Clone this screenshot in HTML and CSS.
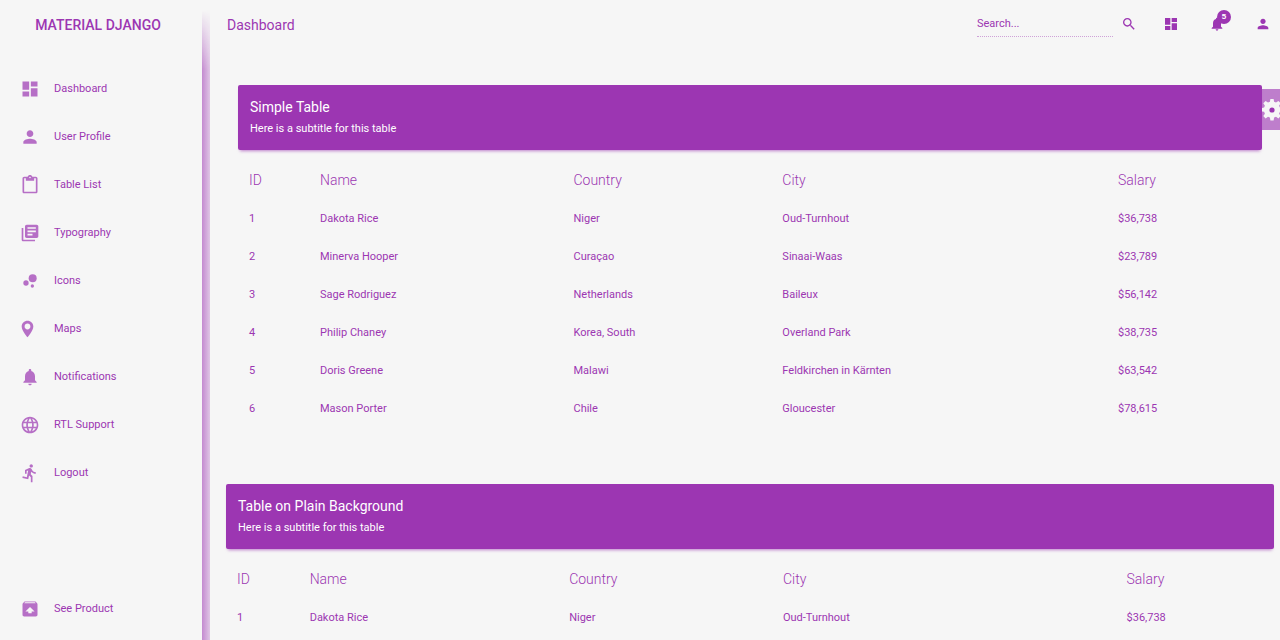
FILE: index.html
```html
<!DOCTYPE html>
<html lang="en">
<head>
<meta charset="utf-8">
<title>Material Django</title>
<meta name="viewport" content="width=device-width, initial-scale=1">
<link rel="stylesheet" href="styles.css">
</head>
<body>
<div class="app">
  <aside class="sidebar">
    <a class="brand" href="#">MATERIAL DJANGO</a>
    <nav class="nav" aria-label="Main">
      <a class="nav-link" href="#"><svg class="icon" viewBox="0 0 24 24"><path d="M3 13h8V3H3v10zm0 8h8v-6H3v6zm10 0h8V11h-8v10zm0-18v6h8V3h-8z"/></svg>Dashboard</a>
      <a class="nav-link" href="#"><svg class="icon" viewBox="0 0 24 24"><path d="M12 12c2.21 0 4-1.79 4-4s-1.79-4-4-4-4 1.79-4 4 1.79 4 4 4zm0 2c-2.67 0-8 1.34-8 4v2h16v-2c0-2.66-5.33-4-8-4z"/></svg>User Profile</a>
      <a class="nav-link" href="#"><svg class="icon" viewBox="0 0 24 24"><path d="M19 2h-4.18C14.4.84 13.3 0 12 0c-1.3 0-2.4.84-2.82 2H5c-1.1 0-2 .9-2 2v16c0 1.1.9 2 2 2h14c1.1 0 2-.9 2-2V4c0-1.1-.9-2-2-2zm-7 0c.55 0 1 .45 1 1s-.45 1-1 1-1-.45-1-1 .45-1 1-1zm7 18H5V4h2v3h10V4h2v16z"/></svg>Table List</a>
      <a class="nav-link" href="#"><svg class="icon" viewBox="0 0 24 24"><path d="M4 6H2v14c0 1.1.9 2 2 2h14v-2H4V6zm16-4H8c-1.1 0-2 .9-2 2v12c0 1.1.9 2 2 2h12c1.1 0 2-.9 2-2V4c0-1.1-.9-2-2-2zm-1 9H9V9h10v2zm-4 4H9v-2h6v2zm4-8H9V5h10v2z"/></svg>Typography</a>
      <a class="nav-link" href="#"><svg class="icon" viewBox="0 0 24 24"><circle cx="7.2" cy="14.4" r="3.2"/><circle cx="14.8" cy="18" r="2"/><circle cx="15.2" cy="8.8" r="4.8"/></svg>Icons</a>
      <a class="nav-link" href="#"><svg class="icon" viewBox="3 0 24 24"><path d="M12 2C8.13 2 5 5.13 5 9c0 5.25 7 13 7 13s7-7.75 7-13c0-3.87-3.13-7-7-7zm0 10.500c-1.930 0-3.500-1.570-3.500-3.500s1.570-3.500 3.500-3.500 3.500 1.570 3.500 3.500-1.570 3.500-3.500 3.500z"/></svg>Maps</a>
      <a class="nav-link" href="#"><svg class="icon" viewBox="0 0 24 24"><path d="M12 22c1.1 0 2-.9 2-2h-4c0 1.1.89 2 2 2zm6-6v-5c0-3.07-1.64-5.64-4.5-6.32V4c0-.83-.67-1.5-1.5-1.5s-1.5.67-1.5 1.5v.68C7.63 5.36 6 7.92 6 11v5l-2 2v1h16v-1l-2-2z"/></svg>Notifications</a>
      <a class="nav-link" href="#"><svg class="icon" viewBox="0 0 24 24"><path d="M11.99 2C6.47 2 2 6.48 2 12s4.47 10 9.99 10C17.52 22 22 17.52 22 12S17.52 2 11.99 2zm6.93 6h-2.95c-.32-1.25-.78-2.45-1.38-3.56 1.84.63 3.37 1.91 4.33 3.56zM12 4.04c.83 1.2 1.48 2.53 1.91 3.96h-3.82c.43-1.43 1.08-2.76 1.91-3.96zM4.26 14C4.1 13.36 4 12.69 4 12s.1-1.36.26-2h3.38c-.08.66-.14 1.32-.14 2 0 .68.06 1.34.14 2H4.26zm.82 2h2.95c.32 1.25.78 2.45 1.38 3.56-1.84-.63-3.37-1.9-4.33-3.56zm2.95-8H5.08c.96-1.66 2.49-2.93 4.33-3.56C8.81 5.55 8.35 6.75 8.03 8zM12 19.96c-.83-1.2-1.48-2.53-1.91-3.96h3.82c-.43 1.43-1.08 2.76-1.91 3.96zM14.34 14H9.66c-.09-.66-.16-1.32-.16-2 0-.68.07-1.35.16-2h4.68c.09.65.16 1.32.16 2 0 .68-.07 1.34-.16 2zm.25 5.56c.6-1.11 1.06-2.31 1.38-3.56h2.95c-.96 1.65-2.49 2.93-4.33 3.56zM16.36 14c.08-.66.14-1.32.14-2 0-.68-.06-1.34-.14-2h3.38c.16.64.26 1.31.26 2s-.1 1.36-.26 2h-3.38z"/></svg>RTL Support</a>
      <a class="nav-link" href="#"><svg class="icon" viewBox="0 0 24 24"><path d="M13.49 5.48c1.1 0 2-.9 2-2s-.9-2-2-2-2 .9-2 2 .9 2 2 2zm-3.6 13.9l1-4.4 2.1 2v6h2v-7.5l-2.1-2 .6-3c1.3 1.5 3.3 2.5 5.5 2.5v-2c-1.9 0-3.5-1-4.3-2.4l-1-1.6c-.4-.6-1-1-1.7-1-.3 0-.5.1-.8.1l-5.2 2.2v4.7h2v-3.4l1.8-.7-1.6 8.1-4.9-1-.4 2 7 1.4z"/></svg>Logout</a>
      <a class="nav-link nav-link-last" href="#"><svg class="icon" viewBox="0 0 24 24"><path d="M20.55 5.22l-1.39-1.68C18.88 3.21 18.47 3 18 3H6c-.47 0-.88.21-1.15.55L3.46 5.22C3.17 5.57 3 6.01 3 6.5V19c0 1.1.89 2 2 2h14c1.1 0 2-.9 2-2V6.5c0-.49-.17-.93-.45-1.28zM12 9.5l5.5 5.5H14v2h-4v-2H6.5L12 9.5zM5.12 5l.82-1h12l.93 1H5.12z"/></svg>See Product</a>
    </nav>
  </aside>
  <div class="edge"></div>
  <main class="main">
    <header class="topbar">
      <h1 class="page-title">Dashboard</h1>
      <form class="search" role="search">
        <input class="search-input" type="text" placeholder="Search..." aria-label="Search">
        <button class="icon-button" type="button" aria-label="Search"><svg class="icon-small" viewBox="0 0 24 24"><path d="M15.5 14h-.79l-.28-.27C15.41 12.59 16 11.11 16 9.5 16 5.91 13.09 3 9.5 3S3 5.91 3 9.5 5.91 16 9.5 16c1.61 0 3.09-.59 4.23-1.57l.27.28v.79l5 4.99L20.49 19l-4.99-5zm-6 0C7.01 14 5 11.99 5 9.5S7.01 5 9.5 5 14 7.01 14 9.5 11.99 14 9.5 14z"/></svg></button>
      </form>
      <div class="actions">
        <button class="icon-button" type="button" aria-label="Overview"><svg class="icon-small" viewBox="0 0 24 24"><path d="M3 13h8V3H3v10zm0 8h8v-6H3v6zm10 0h8V11h-8v10zm0-18v6h8V3h-8z"/></svg></button>
        <button class="icon-button" type="button" aria-label="Notifications"><svg class="icon-small" viewBox="0 0 24 24"><path d="M12 22c1.1 0 2-.9 2-2h-4c0 1.1.89 2 2 2zm6-6v-5c0-3.07-1.64-5.64-4.5-6.32V4c0-.83-.67-1.5-1.5-1.5s-1.5.67-1.5 1.5v.68C7.63 5.36 6 7.92 6 11v5l-2 2v1h16v-1l-2-2z"/></svg><span class="badge">5</span></button>
        <button class="icon-button" type="button" aria-label="Account"><svg class="icon-small" viewBox="0 0 24 24"><path d="M12 12c2.21 0 4-1.79 4-4s-1.79-4-4-4-4 1.79-4 4 1.79 4 4 4zm0 2c-2.67 0-8 1.34-8 4v2h16v-2c0-2.66-5.33-4-8-4z"/></svg></button>
      </div>
    </header>
    <section class="card card-inset">
      <div class="card-header">
        <h2 class="card-title">Simple Table</h2>
        <p class="card-subtitle">Here is a subtitle for this table</p>
      </div>
      <table class="table">
        <colgroup><col class="col-id"><col class="col-name"><col class="col-country"><col class="col-city"><col class="col-salary"></colgroup>
        <thead><tr><th>ID</th><th>Name</th><th>Country</th><th>City</th><th>Salary</th></tr></thead>
        <tbody>
          <tr><td>1</td><td>Dakota Rice</td><td>Niger</td><td>Oud-Turnhout</td><td>$36,738</td></tr>
          <tr><td>2</td><td>Minerva Hooper</td><td>Curaçao</td><td>Sinaai-Waas</td><td>$23,789</td></tr>
          <tr><td>3</td><td>Sage Rodriguez</td><td>Netherlands</td><td>Baileux</td><td>$56,142</td></tr>
          <tr><td>4</td><td>Philip Chaney</td><td>Korea, South</td><td>Overland Park</td><td>$38,735</td></tr>
          <tr><td>5</td><td>Doris Greene</td><td>Malawi</td><td>Feldkirchen in Kärnten</td><td>$63,542</td></tr>
          <tr><td>6</td><td>Mason Porter</td><td>Chile</td><td>Gloucester</td><td>$78,615</td></tr>
        </tbody>
      </table>
    </section>
    <section class="card">
      <div class="card-header">
        <h2 class="card-title">Table on Plain Background</h2>
        <p class="card-subtitle">Here is a subtitle for this table</p>
      </div>
      <table class="table">
        <colgroup><col class="col-id"><col class="col-name"><col class="col-country"><col class="col-city"><col class="col-salary"></colgroup>
        <thead><tr><th>ID</th><th>Name</th><th>Country</th><th>City</th><th>Salary</th></tr></thead>
        <tbody>
          <tr><td>1</td><td>Dakota Rice</td><td>Niger</td><td>Oud-Turnhout</td><td>$36,738</td></tr>
        </tbody>
      </table>
    </section>
  </main>
  <button class="settings" type="button" aria-label="Settings"><svg class="gear" viewBox="0 0 24 24"><path d="M10.4 1h3.2l.5 2.8 1.9.8 2.4-1.6 2.3 2.3-1.6 2.4.8 1.9 2.8.5v3.2l-2.8.5-.8 1.9 1.6 2.4-2.3 2.3-2.4-1.6-1.9.8-.5 2.8h-3.2l-.5-2.8-1.9-.8-2.4 1.6-2.3-2.3 1.6-2.4-.8-1.9-2.8-.5v-3.2l2.800-.5.8-1.9-1.6-2.4 2.3-2.3 2.4 1.6 1.9-.8z"/><circle class="gear-hole" cx="12" cy="12" r="2.6"/></svg></button>
</div>
</body>
</html>
```
FILE: styles.css
```css
:root {
  --purple: #9c36b2;
  --paper: #f6f6f6;
}

* {
  box-sizing: border-box;
}

body {
  margin: 0;
  background: var(--paper);
  color: var(--purple);
  font: 400 11px/16px Roboto, "Liberation Sans", sans-serif;
}

.app {
  display: flex;
  height: 100vh;
  overflow: hidden;
}

.sidebar {
  display: flex;
  flex-direction: column;
  width: 202px;
  flex: none;
}

.brand {
  padding: 15px 0 0;
  margin-right: 6px;
  color: inherit;
  font-size: 14px;
  font-weight: 500;
  line-height: 20px;
  text-align: center;
  text-decoration: none;
}

.nav {
  display: flex;
  flex: 1;
  flex-direction: column;
  gap: 8px;
  padding: 34px 12px 11px;
}

.nav-link {
  display: flex;
  align-items: center;
  gap: 14px;
  height: 40px;
  padding: 0 8px;
  color: inherit;
  line-height: 18px;
  text-decoration: none;
}

.nav-link-last {
  margin-top: auto;
}

.icon {
  width: 20px;
  height: 20px;
  fill: currentColor;
  opacity: 0.7;
}

.edge {
  flex: none;
  width: 8px;
  margin-top: 10px;
  background: linear-gradient(to right, #9c36b290, #9c36b240);
  mask-image: linear-gradient(to bottom, transparent, #000 60px);
}

.main {
  flex: 1;
  min-width: 0;
  padding: 0 6px 0 16px;
}

.topbar {
  display: flex;
  align-items: center;
  height: 48px;
  margin-right: 3px;
}

.page-title {
  margin: 0 auto 0 1px;
  padding-top: 2px;
  font-size: 14px;
  font-weight: 400;
  line-height: 20px;
}

.search {
  display: flex;
  align-items: center;
  gap: 8px;
}

.search-input {
  width: 136px;
  height: 26px;
  padding: 0;
  border: 0;
  border-bottom: 1px dotted #9c36b270;
  background: none;
  color: inherit;
  font: inherit;
  outline: 0;
}

.search-input::placeholder {
  color: inherit;
  opacity: 1;
}

.icon-button {
  position: relative;
  display: flex;
  padding: 0;
  border: 0;
  background: none;
  color: inherit;
}

.icon-small {
  width: 16px;
  height: 16px;
  fill: currentColor;
}

.actions {
  display: flex;
  gap: 30px;
  margin-left: 26px;
}

.badge {
  position: absolute;
  top: -6px;
  left: 8px;
  width: 14px;
  height: 14px;
  border-radius: 50%;
  background: var(--purple);
  color: #fff;
  font-size: 8px;
  font-weight: 700;
  line-height: 14px;
  text-align: center;
}

.card {
  margin-top: 57px;
}

.card-inset {
  margin-top: 37px;
}

.card-inset .card-header {
  margin: 0 12px;
}

.card-inset .table {
  width: calc(100% - 34px);
  margin: 11px 17px 0;
}

.card-header {
  padding: 12px 12px 13px;
  border-radius: 2px;
  background: var(--purple);
  box-shadow: 0 3px 3px -2px #9c36b2a0;
  color: #fff;
}

.card-title {
  margin: 0 0 4px;
  font-size: 14px;
  font-weight: 400;
  line-height: 20px;
}

.card-subtitle {
  margin: 0;
}

.table {
  width: calc(100% - 10px);
  margin: 11px 5px 0;
  border-collapse: collapse;
  table-layout: fixed;
}

.table th,
.table td {
  height: 38px;
  padding: 0 6px;
  font-weight: 400;
  text-align: left;
}

.table td {
  padding-top: 2px;
}

.table th {
  font-size: 14px;
  font-weight: 300;
}

.col-id {
  width: 7%;
}

.col-name {
  width: 25%;
}

.col-country {
  width: 20.6%;
}

.col-city {
  width: 33.1%;
}

.col-salary {
  width: 14.3%;
}

.settings {
  position: absolute;
  top: 89px;
  right: 0;
  width: 18px;
  height: 41px;
  padding: 0;
  overflow: hidden;
  border: 0;
  background: #9c36b2a0;
}

.gear {
  display: block;
  width: 24px;
  height: 24px;
  margin-left: -2px;
  fill: var(--paper);
}

.gear-hole {
  fill: var(--purple);
}
```
